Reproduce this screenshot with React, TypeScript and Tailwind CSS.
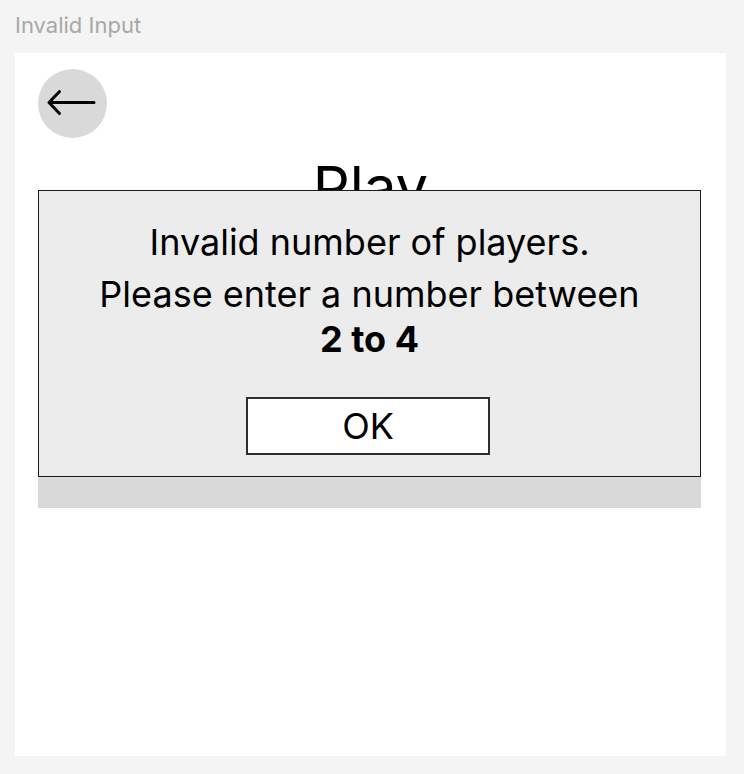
import React from 'react';

const font = { fontFamily: 'Inter, "Noto Sans", sans-serif' };

function BackButton() {
  return (
    <button className="w-[69px] h-[69px] rounded-full bg-[#d9d9d9] flex items-center justify-center">
      <svg width="69" height="69" viewBox="0 0 69 69" fill="none">
        <path d="M11 33.5H56M21.5 22.5L11 33.5L21.5 44.5" stroke="#000" strokeWidth="3" strokeLinecap="round" strokeLinejoin="round" />
      </svg>
    </button>
  );
}

function InvalidDialog() {
  return (
    <div className="absolute left-[23px] top-[137px] w-[663px] h-[287px] bg-[#ececec] border-[1.5px] border-[#1c1c1c] flex flex-col items-center pt-[29px] text-black">
      <p className="text-[36px] leading-[44px]">Invalid number of players.</p>
      <p className="mt-[8px] text-[36px] leading-[45px] text-center">
        Please enter a number between
        <br />
        <span className="font-bold">2 to 4</span>
      </p>
      <button className="mt-[35px] -ml-[3px] w-[244px] h-[58px] bg-white border-2 border-[#2e2e2e] text-[36px] leading-none">
        OK
      </button>
    </div>
  );
}

export default function App() {
  return (
    <div className="w-[744px] h-[774px] bg-[#f4f4f4] px-[15px] pt-[11px]" style={font}>
      <h1 className="text-[22px] leading-[29px] text-[#a8a8a8]">Invalid Input</h1>
      <div className="relative mt-[13px] w-[711px] h-[703px] bg-white px-[23px] pt-[16px]">
        <BackButton />
        <h2 className="mt-[19px] text-center text-[58px] leading-[60px] text-black">Play</h2>
        {/* player count input, hidden behind the dialog */}
        <div className="mt-[167px] w-[663px] h-[124px] bg-[#d9d9d9]" />
        <InvalidDialog />
      </div>
    </div>
  );
}
